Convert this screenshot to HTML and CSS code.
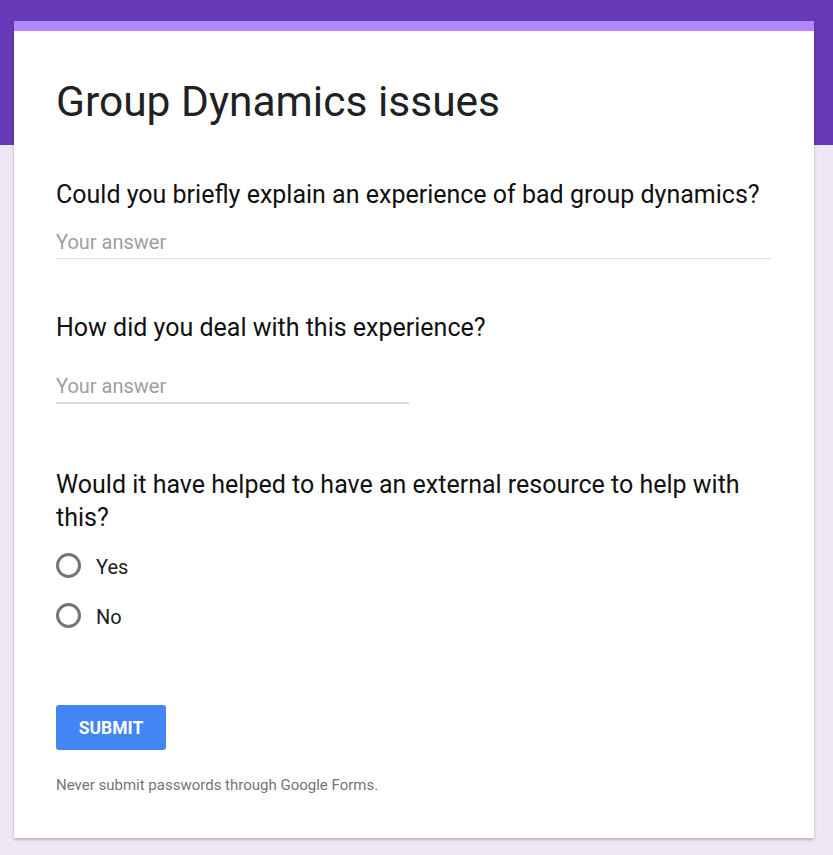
FILE: index.html
```html
<!DOCTYPE html>
<html lang="en">
<head>
<meta charset="utf-8">
<title>Group Dynamics issues</title>
<link rel="stylesheet" href="styles.css">
</head>
<body>
<div class="page">
  <div class="header-band"></div>
  <form class="card">
    <h1 class="form-title">Group Dynamics issues</h1>

    <div class="question q1">
      <div class="q-title">Could you briefly explain an experience of bad group dynamics?</div>
      <div class="answer answer-long">Your answer</div>
    </div>

    <div class="question q2">
      <div class="q-title">How did you deal with this experience?</div>
      <div class="answer answer-short">Your answer</div>
    </div>

    <div class="question q3">
      <div class="q-title">Would it have helped to have an external resource to help with this?</div>
      <div class="options">
        <label class="option"><span class="radio"></span><span class="opt-label">Yes</span></label>
        <label class="option"><span class="radio"></span><span class="opt-label">No</span></label>
      </div>
    </div>

    <button type="button" class="submit">SUBMIT</button>
    <p class="footer-note">Never submit passwords through Google Forms.</p>
  </form>
</div>
</body>
</html>
```
FILE: styles.css
```css
html, body {
  margin: 0;
  padding: 0;
}
body {
  background: #ede7f6;
  font-family: Roboto, "Liberation Sans", Arial, sans-serif;
  color: #202124;
}
.page {
  position: relative;
  min-height: 855px;
  padding-top: 21px;
  box-sizing: border-box;
}
.header-band {
  position: absolute;
  left: 0;
  top: 0;
  right: 0;
  height: 145px;
  background: #673ab7;
}
.card {
  position: relative;
  margin-left: 14px;
  width: 800px;
  box-sizing: border-box;
  background: #fff;
  border-top: 10px solid #b388ff;
  padding: 0 43px 43px 42px;
  box-shadow: 0 2px 2px rgba(0,0,0,0.14), 0 1px 4px rgba(0,0,0,0.12);
}
.form-title {
  margin: 0;
  padding-top: 47px;
  font-size: 42.5px;
  line-height: 48px;
  font-weight: 400;
  color: #202124;
}
.q-title {
  font-size: 25px;
  line-height: 32px;
  color: #111;
}
.q1 {
  margin-top: 53px;
}
.q2 {
  margin-top: 53px;
}
.q3 {
  margin-top: 64px;
}
.q3 .q-title {
  line-height: 33px;
}
.answer {
  font-size: 20px;
  line-height: 24px;
  color: #9e9e9e;
  padding-bottom: 4px;
}
.answer-long {
  margin-top: 19px;
  border-bottom: 1px solid #e0e0e0;
}
.answer-short {
  margin-top: 30px;
  width: 353px;
  border-bottom: 2px solid #dadada;
}
.options {
  margin-top: 6px;
  display: flex;
  flex-direction: column;
}
.option {
  height: 50px;
  display: flex;
  align-items: center;
}
.radio {
  width: 19px;
  height: 19px;
  border: 3px solid #757575;
  border-radius: 50%;
  flex: none;
}
.opt-label {
  margin-left: 15px;
  font-size: 20px;
  line-height: 24px;
  padding-top: 4px;
  color: #202124;
}
.submit {
  display: block;
  margin-top: 65px;
  width: 110px;
  height: 45px;
  border: none;
  border-radius: 3px;
  background: #4285f4;
  color: #fff;
  font-family: Roboto, "Liberation Sans", Arial, sans-serif;
  font-size: 17.5px;
  font-weight: 700;
  letter-spacing: 0;
  padding: 0;
}
.footer-note {
  margin: 25px 0 0 0;
  font-size: 15px;
  line-height: 20px;
  color: #757575;
}
```
